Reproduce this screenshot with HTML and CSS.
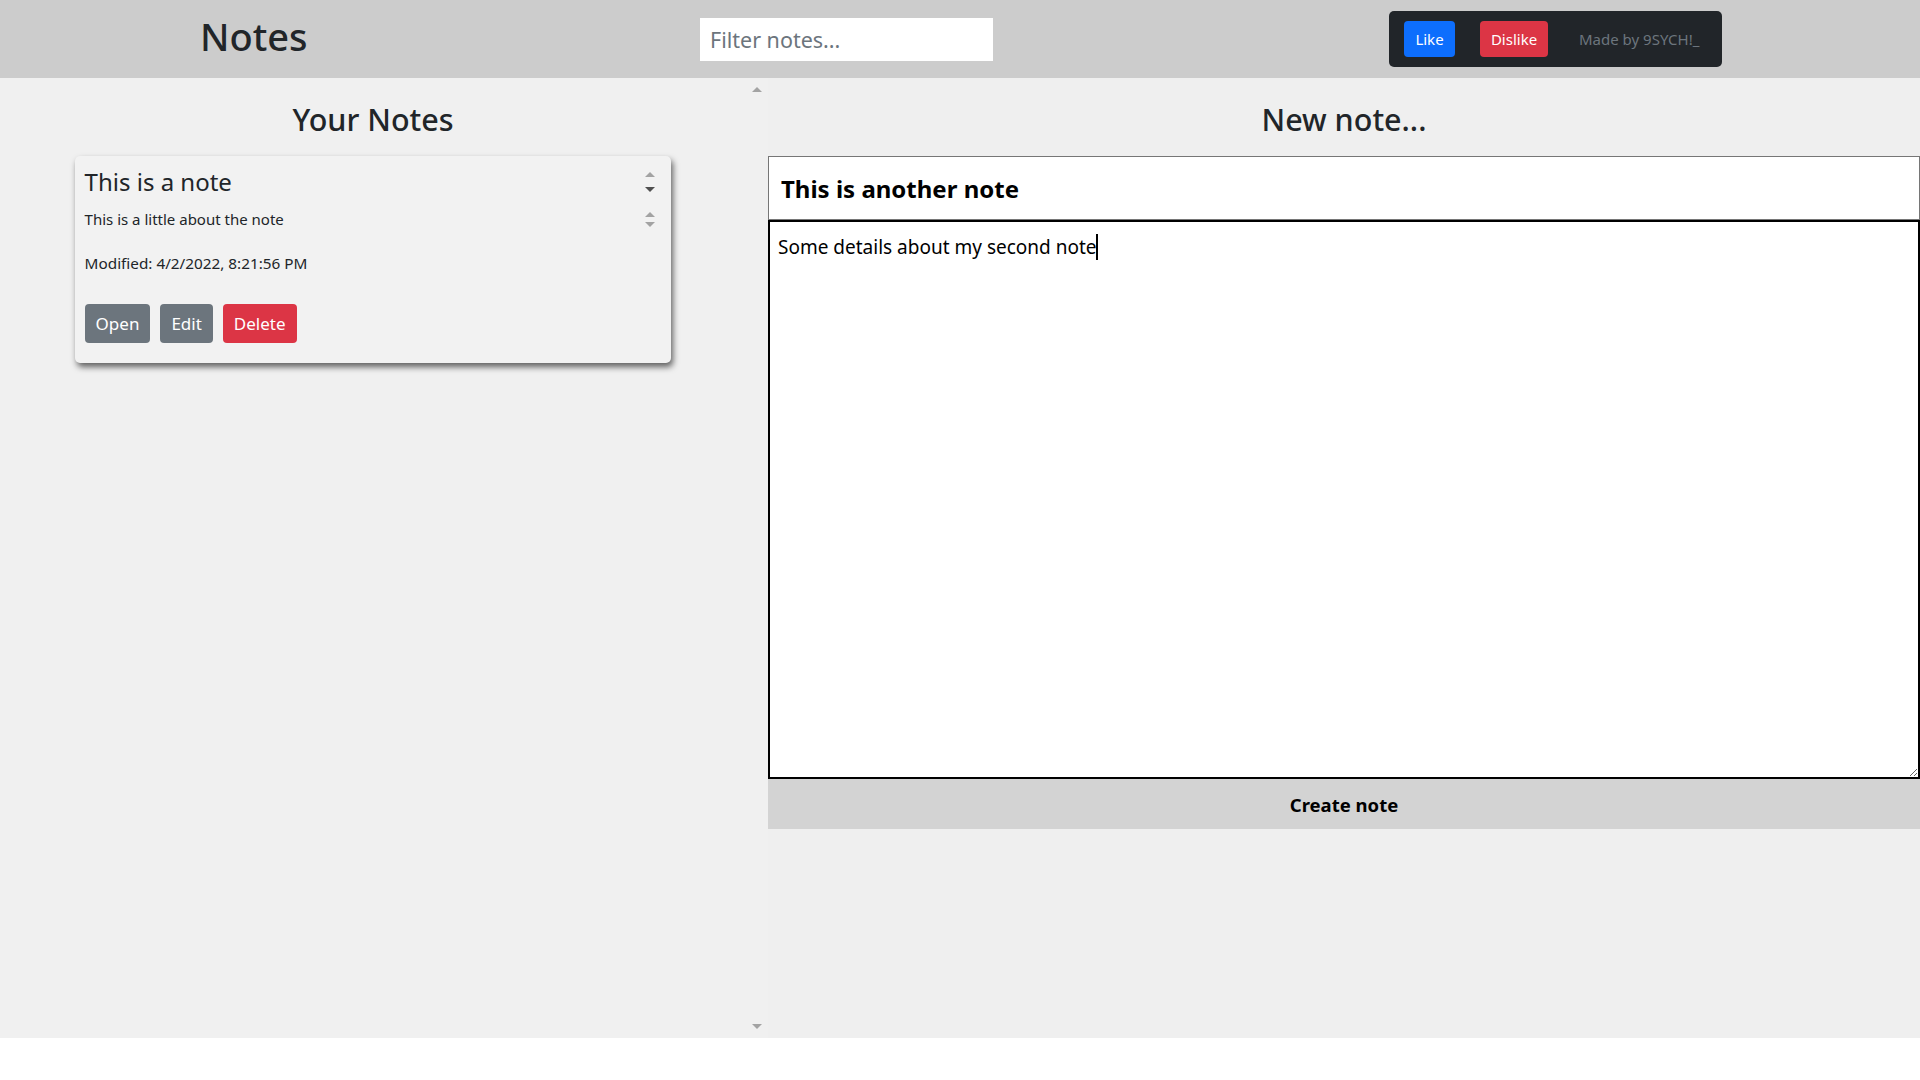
FILE: index.html
```html
<!DOCTYPE html>
<html lang="en">
<head>
<meta charset="utf-8">
<title>Notes</title>
<link rel="stylesheet" href="styles.css">
</head>
<body>
<header class="app-header">
  <div class="brand">Notes</div>
  <input class="filter" type="text" placeholder="Filter notes...">
  <nav class="rate-box">
    <button class="btn btn-like">Like</button>
    <button class="btn btn-dislike">Dislike</button>
    <span class="made-by">Made by 9SYCH!_</span>
  </nav>
</header>
<main class="main">
  <section class="left">
    <div class="left-content">
      <h2 class="panel-title">Your Notes</h2>
      <article class="card">
        <div class="field-row title-row">
          <div class="field-text card-title">This is a note</div>
          <div class="spin spin-title"><span class="arr up"></span><span class="arr down dark"></span></div>
        </div>
        <div class="field-row desc-row">
          <div class="field-text card-desc">This is a little about the note</div>
          <div class="spin spin-desc"><span class="arr up"></span><span class="arr down"></span></div>
        </div>
        <p class="modified">Modified: 4/2/2022, 8:21:56 PM</p>
        <div class="actions">
          <button class="cbtn cbtn-gray">Open</button>
          <button class="cbtn cbtn-gray">Edit</button>
          <button class="cbtn cbtn-red">Delete</button>
        </div>
      </article>
    </div>
    <div class="scrollcol"><span class="arr up"></span><span class="arr down"></span></div>
  </section>
  <section class="right">
    <h2 class="panel-title">New note...</h2>
    <input class="note-title" type="text" value="This is another note">
    <div class="body-wrap">
      <textarea class="note-body">Some details about my second note</textarea>
      <span class="caret"></span>
    </div>
    <button class="create">Create note</button>
  </section>
</main>
</body>
</html>
```
FILE: styles.css
```css
* { box-sizing: border-box; }
body {
  margin: 0;
  background: #ffffff;
  font-family: "Noto Sans", "Open Sans", sans-serif;
  color: #212529;
}
.app-header {
  height: 78px;
  background: #cccccc;
  display: flex;
  align-items: center;
}
.brand {
  flex: 0 0 700px;
  padding-left: 200px;
  font-size: 38px;
  font-weight: 500;
  line-height: 1.2;
  color: #212529;
  margin-top: -4px;
}
.filter {
  width: 293px;
  height: 43px;
  border: none;
  background: #fff;
  font-family: inherit;
  font-size: 21.5px;
  padding: 0 10px;
  color: #212529;
  outline: none;
}
.filter::placeholder { color: #6c757d; }
.rate-box {
  margin-left: auto;
  margin-right: 198px;
  width: 333px;
  height: 56px;
  background: #212529;
  border-radius: 5px;
  display: flex;
  align-items: center;
  padding: 0 15px;
}
.btn {
  height: 36px;
  border: none;
  border-radius: 4px;
  color: #fff;
  font-family: inherit;
  font-size: 15px;
  padding: 0;
}
.btn-like { background: #0d6efd; width: 51px; }
.btn-dislike { background: #dc3545; margin-left: 25px; width: 68px; }
.made-by {
  margin-left: 31px;
  color: #6c757d;
  font-size: 15px;
}
.main {
  display: flex;
  height: 960px;
}
.left {
  width: 768px;
  background: #f0f0f0;
  display: flex;
}
.left-content { flex: 1; }
.scrollcol {
  width: 22px;
  display: flex;
  flex-direction: column;
  justify-content: space-between;
  align-items: center;
  padding: 9px 0 9px;
}
.panel-title {
  margin: 22px 0 18px;
  font-size: 30.5px;
  font-weight: 500;
  line-height: 38px;
  text-align: center;
  color: #212529;
}
.card {
  width: 80%;
  margin: 0 auto;
  background: #f2f2f2;
  border-radius: 5px;
  box-shadow: 2px 4px 6px rgba(0, 0, 0, 0.6);
  padding: 10px 10px 20px 10px;
}
.field-row {
  display: flex;
  align-items: center;
}
.field-text { flex: 1; }
.card-title {
  font-size: 24px;
  line-height: 32px;
  color: #212529;
}
.desc-row { margin-top: 10px; }
.card-desc {
  font-size: 15px;
  line-height: 22px;
}
.spin {
  width: 18px;
  margin-right: 2px;
  display: flex;
  flex-direction: column;
  align-items: center;
  justify-content: space-between;
}
.spin-title { height: 20px; }
.spin-desc { height: 15px; }
.arr {
  display: block;
  width: 0;
  height: 0;
  border-left: 5px solid transparent;
  border-right: 5px solid transparent;
}
.arr.up { border-bottom: 5px solid #a3a3a3; }
.arr.down { border-top: 5px solid #a3a3a3; }
.arr.down.dark { border-top-color: #505050; }
.modified {
  margin: 22px 0 0;
  font-size: 15.3px;
  line-height: 22px;
}
.actions {
  margin-top: 30px;
  display: flex;
  gap: 10px;
}
.cbtn {
  height: 39px;
  border: none;
  border-radius: 4px;
  color: #fff;
  font-family: inherit;
  font-size: 17px;
  padding: 0 11px;
}
.cbtn-gray { background: #6c757d; }
.cbtn-red { background: #dc3545; }
.right {
  flex: 1;
  background: #efefef;
  display: flex;
  flex-direction: column;
}
.note-title {
  width: 100%;
  height: 64px;
  border: 1px solid #767676;
  background: #fff;
  font-family: inherit;
  font-weight: 700;
  font-size: 24px;
  color: #000;
  padding: 0 12px;
  outline: none;
}
.body-wrap {
  position: relative;
}
.note-body {
  width: 100%;
  height: 559px;
  border: 2px solid #000;
  background: #fff;
  font-family: inherit;
  font-size: 19px;
  line-height: 27px;
  color: #000;
  padding: 12px 8px;
  outline: none;
  display: block;
}
.caret {
  position: absolute;
  left: 328px;
  top: 14px;
  width: 2px;
  height: 26px;
  background: #000;
}
.create {
  width: 100%;
  height: 50px;
  border: none;
  background: #d3d3d3;
  font-family: inherit;
  font-weight: 700;
  font-size: 18.5px;
  color: #000;
}
```
